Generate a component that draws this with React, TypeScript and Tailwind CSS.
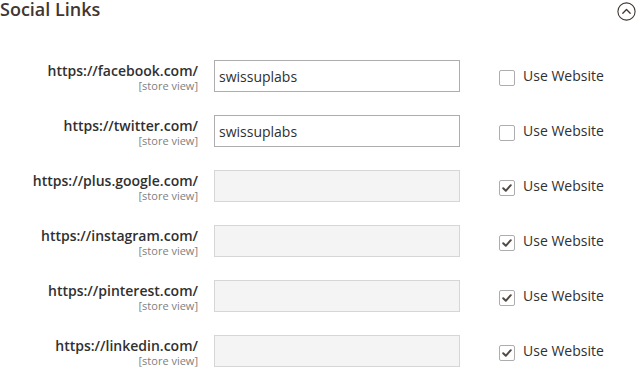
import React from "react";

const rows = [
  { label: "https://facebook.com/", value: "swissuplabs", checked: false },
  { label: "https://twitter.com/", value: "swissuplabs", checked: false },
  { label: "https://plus.google.com/", value: "", checked: true },
  { label: "https://instagram.com/", value: "", checked: true },
  { label: "https://pinterest.com/", value: "", checked: true },
  { label: "https://linkedin.com/", value: "", checked: true },
];

function Checkbox({ checked }: { checked: boolean }) {
  return (
    <div className="mt-[10px] flex h-[16px] w-[16px] shrink-0 items-center justify-center rounded-[2px] border border-[#adadad] bg-white">
      {checked && (
        <svg width="12" height="12" viewBox="0 0 12 12">
          <path d="M2.2 6.2 L4.8 8.8 L9.8 3.2" fill="none" stroke="#514943" strokeWidth="2" strokeLinecap="round" strokeLinejoin="round" />
        </svg>
      )}
    </div>
  );
}

export default function App() {
  return (
    <div
      className="h-[368px] w-[636px] overflow-hidden bg-white text-[#303030]"
      style={{ fontFamily: '"Open Sans", "Noto Sans", sans-serif' }}
    >
      <div className="flex h-[60px] items-start justify-between">
        <div className="text-[18px] font-semibold leading-[20px] mt-[-1px] text-[#41362f]">Social Links</div>
        <svg width="19" height="19" viewBox="0 0 19 19" className="mt-[2px]">
          <circle cx="9.5" cy="9.5" r="8.6" fill="none" stroke="#41362f" strokeWidth="1.1" />
          <path d="M5.8 11.2 L9.5 7.5 L13.2 11.2" fill="none" stroke="#41362f" strokeWidth="1.3" strokeLinecap="round" strokeLinejoin="round" />
        </svg>
      </div>
      <div className="flex flex-col gap-[23px]">
        {rows.map((r) => (
          <div key={r.label} className="flex items-start">
            <div className="w-[198px] shrink-0 pt-[2px] text-right">
              <div className="text-[14px] font-semibold leading-[18px] text-[#303030]">{r.label}</div>
              <div className="mt-[0px] text-[11px] leading-[12px] text-[#808080]">[store view]</div>
            </div>
            <div
              className={
                r.value
                  ? "ml-[16px] flex h-[32px] w-[246px] shrink-0 items-center border border-[#adadad] bg-white pl-[4px] text-[14px] text-[#303030]"
                  : "ml-[16px] flex h-[32px] w-[246px] shrink-0 items-center border border-[#d6d6d6] bg-[#f4f4f4] pl-[4px] text-[14px]"
              }
            >
              {r.value}
            </div>
            <div className="ml-[39px] flex items-start gap-[8px]">
              <Checkbox checked={r.checked} />
              <span className="text-[14px] leading-[32px] text-[#303030]">Use Website</span>
            </div>
          </div>
        ))}
      </div>
    </div>
  );
}
